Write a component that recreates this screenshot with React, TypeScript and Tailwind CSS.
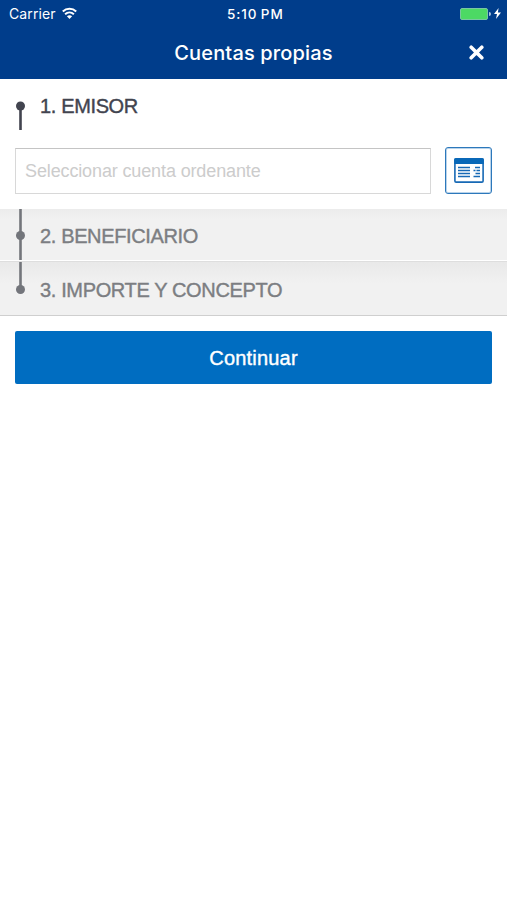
function StatusBar() {
    return (
        <div className="relative flex h-[27px] items-center justify-between pl-[9px] pr-[6px] text-white">
            <div className="flex items-center gap-[6px]">
                <span className="text-[14px] leading-none tracking-[0.1px]">Carrier</span>
                <svg className="-mt-px" width="15" height="12" viewBox="0 0 15 12" fill="none" stroke="currentColor" strokeWidth="2">
                    <path d="M0.8 4.5C4.6 0.8 10.4 0.8 14.2 4.5" />
                    <path d="M3.1 7.2C5.7 4.8 9.3 4.8 11.9 7.2" />
                    <path d="M7.5 12L4.9 9.3C6.4 8 8.6 8 10.1 9.3Z" fill="currentColor" stroke="none" />
                </svg>
            </div>
            <span className="absolute left-[227px] top-[7px] text-[13.5px] font-medium leading-[14px] tracking-[0.9px] [word-spacing:-1px]">5:10 PM</span>
            <div className="flex items-center">
                <div className="h-[12px] w-[28px] rounded-[2px] border border-[#79c6a2] bg-[#4cd964]" />
                <div className="ml-px h-[4px] w-[2px] rounded-r-full bg-[#a9c5df]" />
                <svg className="ml-[3px]" width="7" height="11" viewBox="0 0 7 11" fill="currentColor">
                    <path d="M4.6 0L0 6H3L2 11L7 4.6H3.9Z" />
                </svg>
            </div>
        </div>
    );
}

function Header() {
    return (
        <header className="h-[79px] bg-[#003d8b] font-['Inter',sans-serif]">
            <StatusBar />
            <div className="relative flex h-[51px] items-center justify-center text-white">
                <h1 className="text-[20px] font-medium leading-none tracking-[0.15px]">Cuentas propias</h1>
                <button aria-label="Cerrar" className="absolute right-[23px] top-[18px]">
                    <svg width="15" height="15" viewBox="0 0 15 15" stroke="currentColor" strokeWidth="3.6" strokeLinecap="round">
                        <path d="M2.2 2.2L12.8 12.8M12.8 2.2L2.2 12.8" />
                    </svg>
                </button>
            </div>
        </header>
    );
}

function AccountIcon() {
    return (
        <svg width="30" height="25" viewBox="0 0 30 25" fill="none">
            <rect x="0.9" y="0.9" width="28.2" height="23.2" rx="1.2" stroke="#1769b5" strokeWidth="1.6" />
            <path d="M0.2 1.5Q0.2 0.2 1.5 0.2H28.5Q29.8 0.2 29.8 1.5V6H0.2Z" fill="#0868b8" />
            <path d="M4 9.5H16M4 12.5H16M4 15.5H16M4 18.5H16" stroke="#1769b5" strokeWidth="1.6" />
            <path d="M21 9.5H26M19.5 12.5H21.5M22.5 12.5H26M21.5 15.5H26M19.5 18.5H26" stroke="#1769b5" strokeWidth="1.6" />
        </svg>
    );
}

export default function App() {
    return (
        <div className="min-h-[900px] w-full bg-white font-['Liberation_Sans',Arial,sans-serif]">
            <Header />

            {/* Emisor */}
            <section className="h-[130px] px-[15px]">
                <div className="flex h-[69px] text-[#42444f]">
                    <svg className="mt-[22px]" width="11" height="29" viewBox="0 0 11 29" fill="currentColor">
                        <circle cx="5.5" cy="5" r="4.5" />
                        <rect x="4.2" y="5" width="2.6" height="24" />
                    </svg>
                    <h2 className="ml-[14px] mt-[15px] text-[20px] leading-[25px] tracking-[-0.36px] [-webkit-text-stroke:0.4px]">1. EMISOR</h2>
                </div>
                <div className="flex gap-[14px]">
                    <input
                        type="text"
                        placeholder="Seleccionar cuenta ordenante"
                        className="h-[46px] w-[416px] border border-[#d8d8d8] border-t-[#c4c4c4] bg-white px-[9px] text-[18px] tracking-[-0.13px] outline-none placeholder:text-[#cccccc]"
                    />
                    <button aria-label="Elegir cuenta" className="-mt-px flex h-[47px] w-[47px] items-center justify-center rounded-[3px] border border-[#2c78bb] bg-white shadow-[inset_0_0_0_1px_#b9d3ea]">
                        <AccountIcon />
                    </button>
                </div>
            </section>

            {/* Pasos pendientes */}
            <div className="text-[20px] tracking-[-0.36px] text-[#7c7e82]">
                <div className="flex h-[52px] border-b border-white bg-gradient-to-b from-[#ececec] to-[#f1f1f1] to-20% pl-[15px]">
                    <svg width="11" height="51" viewBox="0 0 11 51" fill="#73757b">
                        <circle cx="5.5" cy="26.5" r="4.5" />
                        <rect x="4.2" width="2.6" height="51" />
                    </svg>
                    <h2 className="ml-[14px] mt-[15px] leading-[25px] [-webkit-text-stroke:0.4px]">2. BENEFICIARIO</h2>
                </div>
                <div className="flex h-[55px] border-b border-t border-b-[#cfcfcf] border-t-[#dedede] bg-gradient-to-b from-[#e9e9e9] to-[#f1f1f1] to-40% pl-[15px]">
                    <svg width="11" height="53" viewBox="0 0 11 53" fill="#73757b">
                        <circle cx="5.5" cy="27.5" r="4.5" />
                        <rect x="4.2" width="2.6" height="27" />
                    </svg>
                    <h2 className="ml-[14px] mt-[16px] leading-[25px] [-webkit-text-stroke:0.4px]">3. IMPORTE Y CONCEPTO</h2>
                </div>
            </div>

            <div className="px-[15px] pt-[15px]">
                <button className="h-[53px] w-full rounded-[2px] bg-[#006dc1] text-[20px] tracking-[0.2px] text-white [-webkit-text-stroke:0.4px]">
                    Continuar
                </button>
            </div>
        </div>
    );
}
